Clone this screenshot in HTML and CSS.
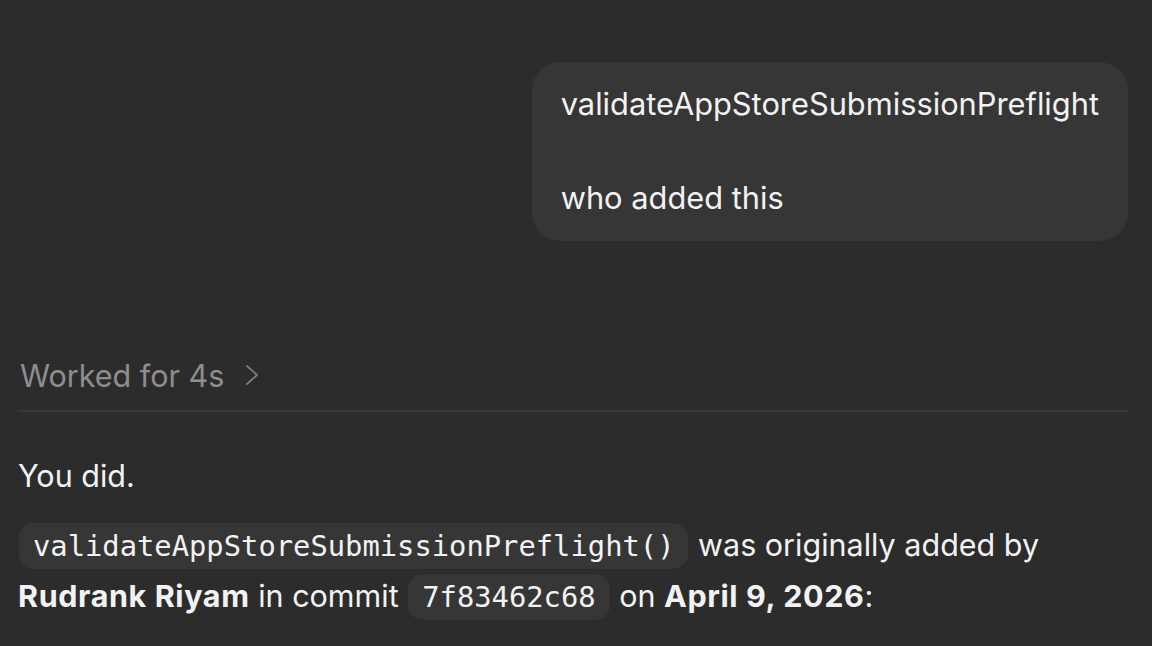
FILE: index.html
```html
<!DOCTYPE html>
<html>
<head>
<meta charset="utf-8">
<link rel="stylesheet" href="styles.css">
</head>
<body>
<main class="thread">
  <div class="user-row">
    <div class="bubble">
      <p>validateAppStoreSubmissionPreflight</p>
      <p>who added this</p>
    </div>
  </div>
  <div class="worked">
    <span>Worked for 4s</span>
    <svg class="chev" width="14" height="22" viewBox="0 0 14 22"><path d="M2 2 L12 11 L2 20" fill="none" stroke="#7c7c7c" stroke-width="1.8" stroke-linecap="round" stroke-linejoin="round"/></svg>
  </div>
  <div class="divider"></div>
  <div class="answer">
    <p class="first">You did.</p>
    <p><code>validateAppStoreSubmissionPreflight()</code> was originally added by <b>Rudrank Riyam</b> in commit <code>7f83462c68</code> on <b>April 9, 2026</b>:</p>
  </div>
</main>
</body>
</html>
```
FILE: styles.css
```css
html, body {
  margin: 0;
  padding: 0;
  background: #2c2c2c;
  height: 100%;
  overflow: hidden;
}
body {
  font-family: Inter, "Noto Sans", sans-serif;
  color: #f2f2f2;
  font-size: 30.5px;
}
.thread {
  padding: 62px 24px 0 18px;
}
.user-row {
  display: flex;
  justify-content: flex-end;
}
.bubble {
  background: #363636;
  border-radius: 28px;
  padding: 18px 29px 20px 29px;
  font-size: 30.8px;
}
.bubble p {
  margin: 0;
  line-height: 47px;
}
.bubble p + p {
  margin-top: 47px;
}
.worked {
  margin-top: 114px;
  display: flex;
  align-items: center;
  gap: 21px;
  color: #8e8e8e;
  padding-left: 2px;
  height: 40px;
}
.chev {
  display: block;
}
.divider {
  margin-top: 15px;
  height: 2px;
  background: #373737;
}
.answer {
  padding-top: 39px;
}
.answer p {
  margin: 0;
  line-height: 50px;
}
.answer p.first {
  margin-bottom: 19px;
}
code {
  font-family: "DejaVu Sans Mono", monospace;
  font-size: 28.8px;
  background: #363636;
  border-radius: 15px;
  padding: 6px 14px;
  margin: 0 1px;
}
b {
  font-weight: 700;
  letter-spacing: 0.6px;
}
```
